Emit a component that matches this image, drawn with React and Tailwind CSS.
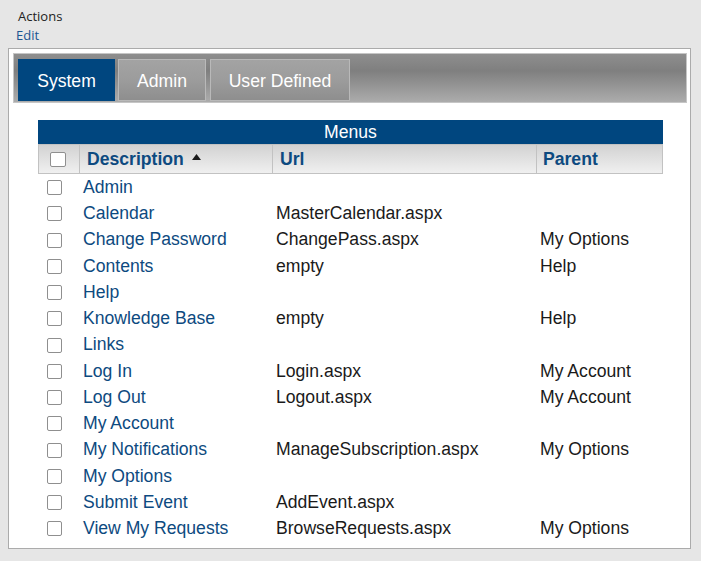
import React from 'react';

const rows = [
    { d: 'Admin', u: '', p: '' },
    { d: 'Calendar', u: 'MasterCalendar.aspx', p: '' },
    { d: 'Change Password', u: 'ChangePass.aspx', p: 'My Options' },
    { d: 'Contents', u: 'empty', p: 'Help' },
    { d: 'Help', u: '', p: '' },
    { d: 'Knowledge Base', u: 'empty', p: 'Help' },
    { d: 'Links', u: '', p: '' },
    { d: 'Log In', u: 'Login.aspx', p: 'My Account' },
    { d: 'Log Out', u: 'Logout.aspx', p: 'My Account' },
    { d: 'My Account', u: '', p: '' },
    { d: 'My Notifications', u: 'ManageSubscription.aspx', p: 'My Options' },
    { d: 'My Options', u: '', p: '' },
    { d: 'Submit Event', u: 'AddEvent.aspx', p: '' },
    { d: 'View My Requests', u: 'BrowseRequests.aspx', p: 'My Options' },
];

function Box({ className = '' }) {
    return <span className={`block w-[15px] h-[15px] bg-white border border-[#8f8f8f] rounded-[2px] ${className}`} />;
}

export default function App() {
    return (
        <div className="min-h-screen bg-[#e6e6e6] font-['Liberation_Sans',Arial,sans-serif] pb-[12px]">
            <div className="pl-[18px] pt-[7px] text-[13px] leading-[18px] text-[#222] font-['Open_Sans',sans-serif]">Actions</div>
            <div className="pl-[16px] pt-[1px] text-[13px] leading-[18px] text-[#1b5591] font-['Open_Sans',sans-serif]">Edit</div>

            <div className="ml-[8px] mt-[4px] w-[683px] h-[501px] bg-white border border-[#ababab] px-[4px] pt-[4px]">
                {/* tab strip */}
                <div className="w-[674px] h-[50px] border border-[#c6c6c6] bg-[linear-gradient(#8e8e8e,#7f7f7f_35%,#acacac)] flex items-end gap-[3px] pl-[4px] pb-[1px]">
                    <div className="w-[97px] h-[42px] pt-[2px] bg-[#00467f] text-white text-[17.6px] flex items-center justify-center">System</div>
                    <div className="w-[88px] h-[42px] pt-[2px] border border-[#b9b9b9] bg-[linear-gradient(#a3a3a3,#9c9c9c_50%,#8e8e8e)] text-white text-[17.6px] flex items-center justify-center">Admin</div>
                    <div className="ml-[1px] w-[140px] h-[42px] pt-[2px] border border-[#b9b9b9] bg-[linear-gradient(#a3a3a3,#9c9c9c_50%,#8e8e8e)] text-white text-[17.6px] flex items-center justify-center">User Defined</div>
                </div>

                {/* menus table */}
                <div className="ml-[25px] mt-[17px] w-[625px]">
                    <div className="h-[24px] bg-[#00467f] text-white text-[17.6px] leading-[24px] text-center">Menus</div>
                    <div className="grid grid-cols-[40px_193px_264px_1fr] h-[30px] border border-[#c2c2c2] bg-[linear-gradient(#d2d2d2,#f0f0f0)] text-[17.6px] font-bold text-[#0d4a80]">
                        <div className="flex items-center pl-[11px]"><Box className="w-[16px] h-[15px]" /></div>
                        <div className="flex items-center pl-[7px] border-l border-[#c2c2c2]">
                            Description
                            <svg width="9" height="6" viewBox="0 0 9 6" className="ml-[8px] mb-[4px]"><polygon points="0,6 9,6 4.5,0" fill="#1a1a1a" /></svg>
                        </div>
                        <div className="flex items-center pl-[7px] border-l border-[#c2c2c2]">Url</div>
                        <div className="flex items-center pl-[6px] border-l border-[#c2c2c2]">Parent</div>
                    </div>
                    {rows.map((r, i) => (
                        <div key={i} className="grid grid-cols-[41px_193px_264px_1fr] h-[26.25px] pt-[1px] items-center text-[17.6px] leading-none">
                            <div className="pl-[9px]"><Box /></div>
                            <div className="pl-[4px] text-[#0d4a80]">{r.d}</div>
                            <div className="pl-[4px] text-[#1a1a1a]">{r.u}</div>
                            <div className="pl-[4px] text-[#1a1a1a]">{r.p}</div>
                        </div>
                    ))}
                </div>
            </div>
        </div>
    );
}
